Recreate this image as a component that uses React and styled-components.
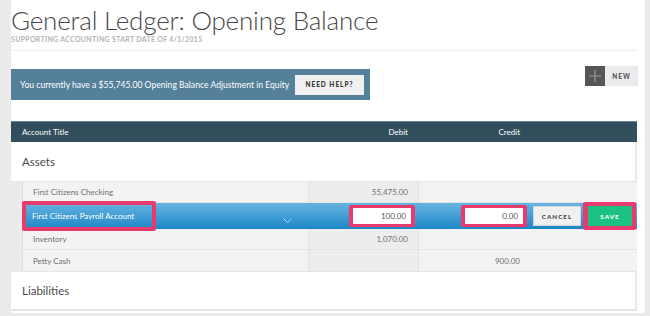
import React from 'react'
import styled, { createGlobalStyle } from 'styled-components'

const GlobalStyle = createGlobalStyle`
    html, body {
        margin: 0;
        padding: 0;
        background: #ebebeb;
    }
    body {
        font-family: Lato, "Liberation Sans", sans-serif;
        -webkit-font-smoothing: antialiased;
    }
    * { box-sizing: border-box; }
`

const Frame = styled.div`
    width: 650px;
    height: 316px;
    overflow: hidden;
    padding-left: 11px;
`

const Panel = styled.div`
    width: 634px;
    height: 313px;
    background: #FFFFFF;
    padding: 6px 8px 0 0;
    display: flex;
    flex-direction: column;
`

const Title = styled.h1`
    margin: 0;
    font-weight: 300;
    font-size: 26px;
    line-height: 28px;
    letter-spacing: -0.2px;
    color: #484848;
`

const Subtitle = styled.div`
    font-weight: 700;
    font-size: 7px;
    line-height: 10px;
    letter-spacing: 0.3px;
    color: #b3b3b3;
    text-transform: uppercase;
    padding-bottom: 6px;
    border-bottom: 1px solid #ececec;
`

const Toolbar = styled.div`
    display: flex;
    justify-content: space-between;
    align-items: flex-start;
    margin-top: 15px;
`

const Banner = styled.div`
    margin-top: 3px;
    width: 359px;
    height: 31px;
    background: #55809a;
    display: flex;
    align-items: center;
    justify-content: space-between;
    padding: 0 6px 0 9px;
    color: #FFFFFF;
    font-size: 8.6px;
`

const HelpButton = styled.button`
    border: none;
    background: #f0f0f0;
    width: 69px;
    height: 20px;
    font-family: inherit;
    font-weight: 900;
    font-size: 6.5px;
    letter-spacing: 1px;
    color: #333333;
    padding: 0;
`

const NewButton = styled.div`
    display: flex;
    height: 20px;
    margin-right: -1px;
`

const PlusBox = styled.div`
    width: 20px;
    height: 20px;
    background: #555555;
    display: flex;
    align-items: center;
    justify-content: center;
`

const NewLabel = styled.div`
    width: 33px;
    background: #ebebeb;
    display: flex;
    align-items: center;
    justify-content: center;
    font-weight: 900;
    font-size: 6.5px;
    letter-spacing: 1px;
    color: #555555;
`

const Table = styled.div`
    margin-top: 21px;
    width: 626px;
    display: flex;
    flex-direction: column;
`

const HeaderRow = styled.div`
    display: grid;
    grid-template-columns: 297px 110px 109px 1fr;
    height: 21px;
    align-items: center;
    background: #314e5d;
    border-top: 1px solid #6f8793;
    color: #FFFFFF;
    font-size: 8px;
`

const HeadCell = styled.div`
    padding: ${p => p.$pad || '0'};
    text-align: ${p => p.$align || 'left'};
`

const GroupTitle = styled.div`
    height: ${p => p.$h || 39}px;
    display: flex;
    align-items: center;
    padding-left: 11px;
    background: #FFFFFF;
    border-right: 2px solid #e8e8e8;
    font-size: 11.5px;
    color: #4a4a4a;
    ${p => p.$last && 'border-bottom: 2px solid #e6e6e6;'}
`

const GroupBody = styled.div`
    background: #ebebeb;
    padding-left: 11px;
    border-top: 1px solid #e6e6e6;
`

const Row = styled.div`
    display: grid;
    grid-template-columns: 286px 110px 109px 1fr;
    height: ${p => p.$h || 21}px;
    background: #f3f3f3;
    border-left: 1px solid #e0e0e0;
    border-bottom: 1px solid #e4e4e4;
    font-size: 8px;
    color: #6f6f6f;
`

const Cell = styled.div`
    display: flex;
    align-items: center;
    justify-content: ${p => p.$right ? 'flex-end' : 'flex-start'};
    padding: 0 ${p => p.$pr || 0}px 0 ${p => p.$pl || 0}px;
    background: ${p => p.$shade ? '#ededed' : 'transparent'};
    border-right: ${p => p.$line ? '1px solid #e2e2e2' : 'none'};
`

const ActiveRow = styled.div`
    display: grid;
    grid-template-columns: 286px 110px 109px 1fr;
    height: 26px;
    background: linear-gradient(#66b4e2, #1d87c7);
    font-size: 8px;
    color: #FFFFFF;
`

const ActiveCell = styled.div`
    display: flex;
    align-items: center;
    justify-content: ${p => p.$right ? 'flex-end' : 'flex-start'};
    padding-right: ${p => p.$pr || 0}px;
    padding-left: ${p => p.$pl || 0}px;
    gap: ${p => p.$gap || 0}px;
`

const Callout = styled.div`
    border: 4px solid #e93a6d;
    border-width: ${p => p.$bw || '4px'};
    border-radius: 2px;
    margin: ${p => p.$m || '0'};
    display: flex;
    align-items: center;
`

const NameBox = styled.div`
    width: 126px;
    height: 22px;
    padding-left: 6px;
    display: flex;
    align-items: center;
    color: #FFFFFF;
    font-size: 8px;
`

const Chevron = styled.svg`
    margin-left: auto;
    margin-right: 16px;
    margin-top: 8px;
`

const Amount = styled.input`
    width: 58px;
    height: 16px;
    border: none;
    outline: none;
    background: #FFFFFF;
    padding: 0 5px 0 0;
    text-align: right;
    font-family: inherit;
    font-size: 8px;
    color: #555555;
`

const ActionButton = styled.button`
    width: ${p => p.$w}px;
    height: 20px;
    padding: 0;
    border: ${p => p.$primary ? 'none' : '1px solid #d6d6d6'};
    background: ${p => p.$primary ? '#1cc282' : '#f0f0f0'};
    color: ${p => p.$primary ? '#FFFFFF' : '#444444'};
    font-family: inherit;
    font-weight: 900;
    font-size: 6.3px;
    letter-spacing: 1px;
`

const accounts = [
    { id: 'chk', name: 'First Citizens Checking', debit: '55,475.00', credit: '' },
    { id: 'pay', name: 'First Citizens Payroll Account', debit: '100.00', credit: '0.00', editing: true },
    { id: 'inv', name: 'Inventory', debit: '1,070.00', credit: '' },
    { id: 'pet', name: 'Petty Cash', debit: '', credit: '900.00', h: 22 }
]

const App = () => {
    return (
        <>
            <GlobalStyle />
            <Frame>
                <Panel>
                    <Title>General Ledger: Opening Balance</Title>
                    <Subtitle>Supporting accounting start date of 4/1/2015</Subtitle>

                    <Toolbar>
                        <Banner>
                            You currently have a $55,745.00 Opening Balance Adjustment in Equity
                            <HelpButton>NEED HELP?</HelpButton>
                        </Banner>
                        <NewButton>
                            <PlusBox>
                                <svg width="12" height="12" viewBox="0 0 12 12">
                                    <path d="M6 0v12M0 6h12" stroke="#9a9a9a" strokeWidth="1.2" />
                                </svg>
                            </PlusBox>
                            <NewLabel>NEW</NewLabel>
                        </NewButton>
                    </Toolbar>

                    <Table>
                        <HeaderRow>
                            <HeadCell $pad="0 0 0 11px">Account Title</HeadCell>
                            <HeadCell $pad="0 10px 0 0" $align="right">Debit</HeadCell>
                            <HeadCell $pad="0 7px 0 0" $align="right">Credit</HeadCell>
                            <HeadCell />
                        </HeaderRow>

                        <GroupTitle>Assets</GroupTitle>
                        <GroupBody>
                            {accounts.map(a => a.editing ? (
                                <ActiveRow key={a.id}>
                                    <ActiveCell>
                                        <Callout $m="-2px 0">
                                            <NameBox>{a.name}</NameBox>
                                        </Callout>
                                        <Chevron width="9" height="5" viewBox="0 0 9 5">
                                            <path d="M0.5 0.5L4.5 4.5L8.5 0.5" fill="none" stroke="rgba(255,255,255,0.75)" strokeWidth="0.8" />
                                        </Chevron>
                                    </ActiveCell>
                                    <ActiveCell $right $pr={3}>
                                        <Callout $bw="3px 4px">
                                            <Amount defaultValue={a.debit} />
                                        </Callout>
                                    </ActiveCell>
                                    <ActiveCell $right>
                                        <Callout $bw="3px 4px">
                                            <Amount defaultValue={a.credit} />
                                        </Callout>
                                    </ActiveCell>
                                    <ActiveCell $pl={6} $gap={2}>
                                        <ActionButton $w={48}>CANCEL</ActionButton>
                                        <Callout $m="-1px 0" $bw="4px 4px 4px 5px">
                                            <ActionButton $w={44} $primary>SAVE</ActionButton>
                                        </Callout>
                                    </ActiveCell>
                                </ActiveRow>
                            ) : (
                                <Row key={a.id} $h={a.h}>
                                    <Cell $pl={10} $line>{a.name}</Cell>
                                    <Cell $right $pr={10} $shade $line>{a.debit}</Cell>
                                    <Cell $right $pr={8}>{a.credit}</Cell>
                                    <Cell />
                                </Row>
                            ))}
                        </GroupBody>

                        <GroupTitle $last>Liabilities</GroupTitle>
                    </Table>
                </Panel>
            </Frame>
        </>
    )
}

export default App
